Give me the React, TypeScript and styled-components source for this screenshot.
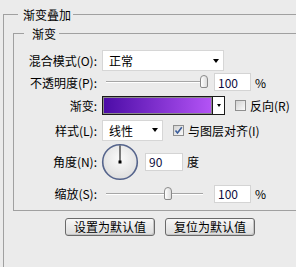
import React from 'react';
import styled, { createGlobalStyle } from 'styled-components';

const GlobalStyle = createGlobalStyle`
  html, body {
    margin: 0;
    padding: 0;
    background: #ebebeb;
    overflow: hidden;
  }
  body {
    font-family: "Noto Sans CJK SC", "Liberation Sans", sans-serif;
    font-size: 12px;
    color: #000;
  }
`;

const App = () => {
  return (
    <Page>
      <GlobalStyle />
      <OuterSet>
        <Legend $ml={14} $pl={5} $pr={2}>渐变叠加</Legend>
        <InnerSet>
          <Legend $ml={10} $pl={8} $pr={3}>渐变</Legend>
          <Row $h={23}>
            <Label>混合模式(O):</Label>
            <Select $w={122}>
              <span>正常</span>
              <Caret />
            </Select>
          </Row>
          <Row $h={20}>
            <Label>不透明度(P):</Label>
            <Slider>
              <Track />
              <Thumb style={{ left: `${1 * 94}px` }} />
            </Slider>
            <NumBox $w={37}>100</NumBox>
            <Unit>%</Unit>
          </Row>
          <Row $h={27}>
            <Label>渐变:</Label>
            <Swatch />
            <SwatchArrow>
              <Caret $small />
            </SwatchArrow>
            <Check />
            <span>反向(R)</span>
          </Row>
          <Row $h={22}>
            <Label>样式(L):</Label>
            <Select $w={61}>
              <span>线性</span>
              <Caret />
            </Select>
            <Check $checked>
              <svg width="9" height="9" viewBox="0 0 9 9">
                <path d="M1.5 4.5 L3.5 7 L7.8 1.2" fill="none" stroke="#3b5c9a" strokeWidth="1.6" />
              </svg>
            </Check>
            <span>与图层对齐(I)</span>
          </Row>
          <Row $h={41}>
            <Label>角度(N):</Label>
            <Dial>
              <svg width="38" height="38" viewBox="0 0 38 38">
                <defs>
                  <radialGradient id="dialFill" cx="50%" cy="40%" r="60%">
                    <stop offset="0%" stopColor="#fbfbfb" />
                    <stop offset="100%" stopColor="#dedede" />
                  </radialGradient>
                </defs>
                <circle cx="19" cy="19" r="17.3" fill="url(#dialFill)" stroke="#55648c" strokeWidth="1.6" />
                <line x1="19" y1="2.5" x2="19" y2="19" stroke="#000" strokeWidth="1" />
                <rect x="17.5" y="17.5" width="3" height="3" fill="#000" />
              </svg>
            </Dial>
            <NumBox $w={38}>90</NumBox>
            <Unit>度</Unit>
          </Row>
          <Row $h={23}>
            <Label>缩放(S):</Label>
            <Slider>
              <Track $short />
              <Thumb style={{ left: `${0.615 * 94}px` }} />
            </Slider>
            <NumBox $w={37}>100</NumBox>
            <Unit>%</Unit>
          </Row>
        </InnerSet>
        <Buttons>
          <Button>设置为默认值</Button>
          <Button>复位为默认值</Button>
        </Buttons>
      </OuterSet>
    </Page>
  );
};

export default App;

const Page = styled.div`
  width: 296px;
  height: 267px;
  overflow: hidden;
  padding: 6px 0 0 3px;
  box-sizing: border-box;
`;

const OuterSet = styled.fieldset`
  margin: 0;
  padding: 1px 0 60px 0;
  border: 1px solid #a0a0a0;
  width: 330px;
  min-width: 0;
  box-sizing: border-box;
`;

const InnerSet = styled.fieldset`
  margin: 1px 0 0 9px;
  padding: 7px 0 5px 0;
  border: 1px solid #a0a0a0;
  width: 310px;
  min-width: 0;
  box-sizing: border-box;
`;

const Legend = styled.legend<{ $ml: number; $pl: number; $pr: number }>`
  margin-left: ${(p) => p.$ml}px;
  padding: 0 ${(p) => p.$pr}px 0 ${(p) => p.$pl}px;
  line-height: 17px;
  font-size: 12px;
`;

const Row = styled.div<{ $h: number }>`
  display: flex;
  align-items: center;
  height: ${(p) => p.$h}px;
  white-space: nowrap;
`;

const Label = styled.div`
  flex: none;
  width: 83px;
  margin-right: 5px;
  text-align: right;
`;

const Select = styled.div<{ $w: number }>`
  flex: none;
  width: ${(p) => p.$w}px;
  height: 21px;
  box-sizing: border-box;
  background: #fff;
  border: 1px solid #d6d6d6;
  display: flex;
  align-items: center;
  justify-content: space-between;
  padding: 0 4px 0 6px;
`;

const Caret = styled.span<{ $small?: boolean }>`
  width: 0;
  height: 0;
  border-style: solid;
  border-color: #000 transparent transparent transparent;
  border-width: ${(p) => (p.$small ? '3px 2.5px 0 2.5px' : '4px 3.5px 0 3.5px')};
`;

const Slider = styled.div`
  flex: none;
  position: relative;
  width: 102px;
  height: 14px;
  margin-left: 4px;
  display: flex;
  align-items: center;
`;

const Track = styled.div<{ $short?: boolean }>`
  width: ${(p) => (p.$short ? 97 : 99)}px;
  height: 0;
  border-top: 1px solid #a6a6a6;
  border-bottom: 1px solid #ffffff;
`;

const Thumb = styled.div`
  position: absolute;
  top: 0;
  width: 8px;
  height: 13px;
  box-sizing: border-box;
  border: 1px solid #8a8a8a;
  border-radius: 4px 4px 2px 2px;
  background: linear-gradient(to right, #ffffff, #dcdcdc);
`;

const NumBox = styled.div<{ $w: number }>`
  flex: none;
  width: ${(p) => p.$w}px;
  height: 18px;
  box-sizing: border-box;
  margin-left: 6px;
  padding-left: 3px;
  background: #fff;
  border: 1px solid #d4d4d4;
  display: flex;
  align-items: center;
  color: #0d0d40;
`;

const Unit = styled.span`
  margin-left: 4px;
`;

const Swatch = styled.div`
  flex: none;
  width: 111px;
  height: 19px;
  box-sizing: border-box;
  border: 1px solid #1a1a1a;
  box-shadow: inset 0 0 0 1px #8a8a8a;
  background: linear-gradient(to right, #4b0ca6, #b454f6);
`;

const SwatchArrow = styled.div`
  flex: none;
  width: 12px;
  height: 19px;
  box-sizing: border-box;
  border: 1px solid #1a1a1a;
  border-left: none;
  background: #fff;
  display: flex;
  align-items: center;
  justify-content: center;
`;

const Check = styled.span<{ $checked?: boolean }>`
  flex: none;
  width: 11px;
  height: 11px;
  box-sizing: border-box;
  margin: 0 4px 0 10px;
  border: 1px solid #8f8f8f;
  background: linear-gradient(135deg, #d2d2d2, #fafafa);
  display: flex;
  align-items: center;
  justify-content: center;
`;

const Dial = styled.div`
  flex: none;
  width: 38px;
  height: 38px;
  margin-left: -1px;
  display: flex;
`;

const Buttons = styled.div`
  display: flex;
  gap: 10px;
  margin-top: 7px;
  padding-left: 61px;
`;

const Button = styled.button`
  width: 90px;
  height: 18px;
  padding: 0;
  font-family: inherit;
  font-size: 12px;
  line-height: 16px;
  color: #000;
  border: 1px solid #6a6a6a;
  border-radius: 3px;
  background: linear-gradient(#f7f7f7, #dcdcdc);
  box-shadow: inset -1px -1px 0 #c4c4c4;
`;
